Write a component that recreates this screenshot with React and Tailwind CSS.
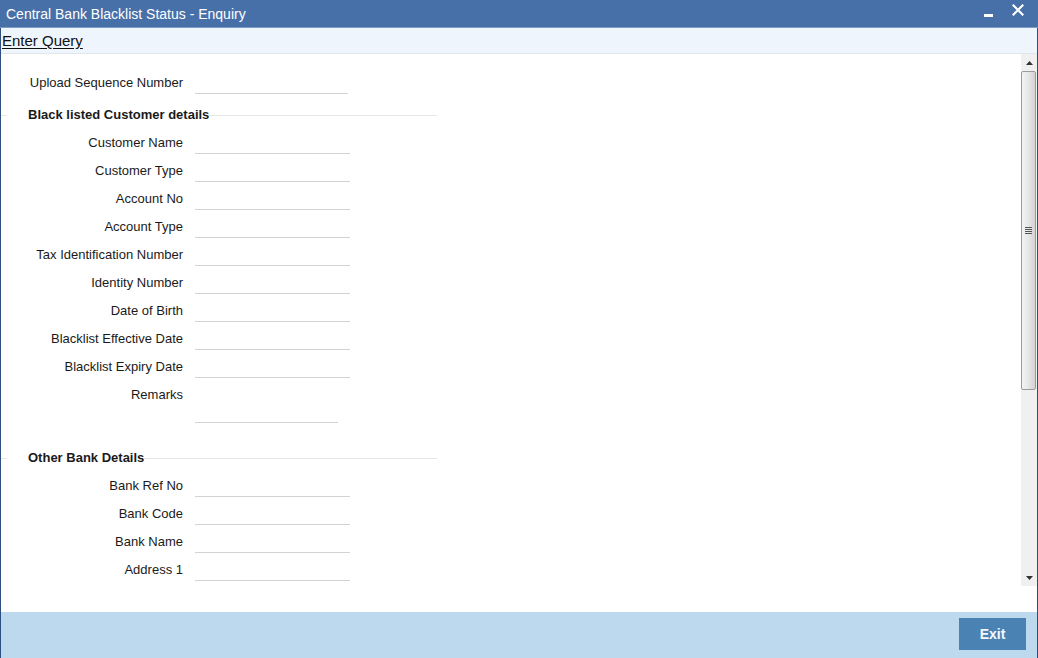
import React from "react";

const font = { fontFamily: '"Liberation Sans", Arial, sans-serif' };

function Row({ label, w = "w-[155px]" }) {
  return (
    <div className="flex h-[28px] items-center">
      <div className="w-[182px] text-right text-[13px] leading-[16px] text-[#1a1a1a]">{label}</div>
      <div className={`ml-[12px] h-[22px] ${w} border-b border-[#d3d3d3]`} />
    </div>
  );
}

function Section({ title }) {
  return (
    <div className="flex h-[20px] w-[436px] items-center">
      <div className="w-[6px] border-t border-[#e6e6e6]" />
      <span className="pl-[21px] text-[13px] font-bold leading-[16px] text-[#1a1a1a]">{title}</span>
      <div className="flex-1 border-t border-[#e6e6e6]" />
    </div>
  );
}

export default function App() {
  return (
    <div
      style={font}
      className="flex h-[658px] w-[1038px] flex-col overflow-hidden bg-white"
    >
      {/* Title bar */}
      <div className="flex h-[28px] items-center bg-[#476fa8] pl-[6px] pr-[14px] text-white border-b border-[#7f9cc4]">
        <div className="text-[14px] leading-[16px]">Central Bank Blacklist Status - Enquiry</div>
        <div className="ml-auto flex items-center gap-[19px]">
          <div className="mt-[3px] h-[3px] w-[9px] bg-white" />
          <svg width="12" height="12" viewBox="0 0 12 12" className="mb-[8px]">
            <path d="M1.5 1.5 L10.5 10.5 M10.5 1.5 L1.5 10.5" stroke="white" strokeWidth="2.2" strokeLinecap="square" />
          </svg>
        </div>
      </div>

      <div className="flex flex-1 flex-col border-x border-l-[#2d4e7e] border-r-[#2d4e7e] border-x-[1px]">
        {/* Enter Query */}
        <div className="flex h-[26px] items-center border-b border-[#e1e6ec] bg-[#eef5fd] pl-[1px]">
          <span className="text-[15px] leading-[17px] text-[#111] underline underline-offset-[2px]">Enter Query</span>
        </div>

        {/* Body */}
        <div className="flex flex-1 flex-col">
          <div className="flex h-[532px]">
            <div className="flex-1 overflow-hidden pt-[15px]">
              <Row label="Upload Sequence Number" w="w-[153px]" />
              <div className="mt-[8px]">
                <Section title="Black listed Customer details" />
              </div>
              <div className="mt-[4px]">
                <Row label="Customer Name" />
                <Row label="Customer Type" />
                <Row label="Account No" />
                <Row label="Account Type" />
                <Row label="Tax Identification Number" />
                <Row label="Identity Number" />
                <Row label="Date of Birth" />
                <Row label="Blacklist Effective Date" />
                <Row label="Blacklist Expiry Date" />
                <div className="flex h-[42px] items-start">
                  <div className="w-[182px] pt-[6px] text-right text-[13px] leading-[16px] text-[#1a1a1a]">Remarks</div>
                  <div className="ml-[12px] h-[42px] w-[143px] border-b border-[#d3d3d3]" />
                </div>
              </div>
              <div className="mt-[25px]">
                <Section title="Other Bank Details" />
              </div>
              <div className="mt-[4px]">
                <Row label="Bank Ref No" />
                <Row label="Bank Code" />
                <Row label="Bank Name" />
                <Row label="Address 1" />
              </div>
            </div>

            {/* Scrollbar */}
            <div className="flex w-[16px] flex-col bg-[#f0f0f0]">
              <div className="flex h-[17px] items-center justify-center">
                <svg width="7" height="4" viewBox="0 0 7 4"><path d="M0 4 L3.5 0 L7 4 Z" fill="#333" /></svg>
              </div>
              <div className="flex h-[319px] w-[15px] items-center justify-center rounded-[2px] border border-[#9a9a9a] bg-gradient-to-r from-[#f4f4f4] via-[#e6e6e6] to-[#d2d2d2]">
                <div className="flex flex-col gap-[1px]">
                  <div className="h-[1px] w-[7px] bg-[#555]" />
                  <div className="h-[1px] w-[7px] bg-[#555]" />
                  <div className="h-[1px] w-[7px] bg-[#555]" />
                  <div className="h-[1px] w-[7px] bg-[#555]" />
                </div>
              </div>
              <div className="flex-1" />
              <div className="flex h-[17px] items-center justify-center">
                <svg width="7" height="4" viewBox="0 0 7 4"><path d="M0 0 L3.5 4 L7 0 Z" fill="#333" /></svg>
              </div>
            </div>
          </div>
          <div className="flex-1" />
        </div>

        {/* Footer */}
        <div className="flex h-[46px] items-start justify-end bg-[#bdd9ee] pr-[11px] pt-[6px]">
          <button className="h-[32px] w-[67px] bg-[#4a83b3] text-[14px] font-bold text-[#f4f8fc]">Exit</button>
        </div>
      </div>
    </div>
  );
}
